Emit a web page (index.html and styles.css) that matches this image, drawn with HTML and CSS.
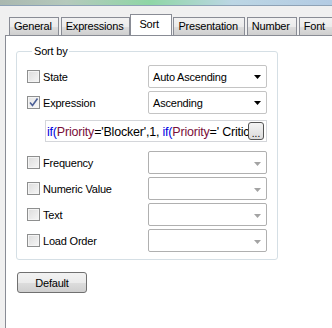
FILE: index.html
```html
<!DOCTYPE html>
<html lang="en">

<head>
    <meta charset="UTF-8">
    <title>Sort</title>
    <link rel="stylesheet" href="styles.css">
</head>

<body>
    <div class="titlebar"></div>

    <div class="tabs">
        <div class="tab">General</div>
        <div class="tab">Expressions</div>
        <div class="tab active">Sort</div>
        <div class="tab">Presentation</div>
        <div class="tab">Number</div>
        <div class="tab">Font</div>
        <div class="tab">Layout</div>
    </div>

    <div class="panel">
        <fieldset class="group">
            <legend>Sort by</legend>

            <div class="row">
                <label class="check"><span class="box"></span>State</label>
                <div class="select">Auto Ascending
                    <svg class="arrow" width="7" height="4" viewBox="0 0 7 4"><path d="M0 0H7L3.5 4Z" fill="#000"/></svg>
                </div>
            </div>

            <div class="row">
                <label class="check"><span class="box checked">
                    <svg width="11" height="11" viewBox="0 0 11 11"><path d="M2 5.5L4.5 8.5L9.5 1.5" fill="none" stroke="#4b5f96" stroke-width="1.6"/></svg>
                </span>Expression</label>
                <div class="select">Ascending
                    <svg class="arrow" width="7" height="4" viewBox="0 0 7 4"><path d="M0 0H7L3.5 4Z" fill="#000"/></svg>
                </div>
            </div>

            <div class="expr">
                <div class="code">
                    <span class="fn">if(</span><span class="fld">Priority</span>='Blocker',1, <span class="fn">if(</span><span class="fld">Priority</span>=' Critical',2,<br>
                    <span class="str">if(Priority='Major',3, if(Priority='Minor',4,5))))</span>
                </div>
                <button class="more">...</button>
            </div>

            <div class="row spaced">
                <label class="check"><span class="box"></span>Frequency</label>
                <div class="select disabled">
                    <svg class="arrow" width="7" height="4" viewBox="0 0 7 4"><path d="M0 0H7L3.5 4Z" fill="#a3a3a3"/></svg>
                </div>
            </div>

            <div class="row">
                <label class="check"><span class="box"></span>Numeric Value</label>
                <div class="select disabled">
                    <svg class="arrow" width="7" height="4" viewBox="0 0 7 4"><path d="M0 0H7L3.5 4Z" fill="#a3a3a3"/></svg>
                </div>
            </div>

            <div class="row">
                <label class="check"><span class="box"></span>Text</label>
                <div class="select disabled">
                    <svg class="arrow" width="7" height="4" viewBox="0 0 7 4"><path d="M0 0H7L3.5 4Z" fill="#a3a3a3"/></svg>
                </div>
            </div>

            <div class="row">
                <label class="check"><span class="box"></span>Load Order</label>
                <div class="select disabled">
                    <svg class="arrow" width="7" height="4" viewBox="0 0 7 4"><path d="M0 0H7L3.5 4Z" fill="#a3a3a3"/></svg>
                </div>
            </div>
        </fieldset>

        <button class="btn">Default</button>
    </div>
</body>

</html>
```

FILE: styles.css
```css
/* Reset */
* {
    margin: 0;
    padding: 0;
    box-sizing: border-box;
}

body {
    font-family: 'Liberation Sans', Arial, sans-serif;
    font-size: 11px;
    letter-spacing: -0.2px;
    color: #000;
    background-color: #f0f0f0;
    width: 332px;
    height: 328px;
    overflow: hidden;
}

.titlebar {
    height: 6px;
    background: linear-gradient(to right, #aab8b0, #b5c9bc 20%, #8fd6a6 45%, #bcd6e4 70%, #b3cbe3);
    border-bottom: 1px solid #8ea2b6;
}

/* Tabs */
.tabs {
    display: flex;
    align-items: flex-end;
    gap: 2px;
    padding-left: 9px;
    margin-top: 7px;
    height: 22px;
    position: relative;
    z-index: 1;
    overflow: hidden;
}

.tab {
    flex-shrink: 0;
    height: 18px;
    line-height: 17px;
    min-width: 42px;
    padding: 0 6px 0 4px;
    border: 1px solid #898c95;
    border-bottom: none;
    background: linear-gradient(#f2f2f2, #ebebeb 50%, #dddddd 51%, #cfcfcf);
    white-space: nowrap;
}

.tab.active {
    height: 22px;
    line-height: 18px;
    padding: 0 8px 0 8px;
    margin: 0 -1px -1px -2px;
    background: #fff;
}

/* Panel */
.panel {
    margin-left: 5px;
    height: 300px;
    background: #fff;
    border-left: 1px solid #898c95;
    border-top: 1px solid #898c95;
    padding: 9px 0 0 10px;
}

.group {
    width: 262px;
    min-width: 0;
    border: 1px solid #d5dfe5;
    border-radius: 3px;
    padding: 8px 10px 4px 10px;
}

.group legend {
    margin-left: 5px;
    padding: 0 2px;
}

.row {
    display: flex;
    align-items: center;
    justify-content: space-between;
    height: 23px;
    margin-bottom: 3px;
}

.row.spaced {
    margin-top: 9px;
}

.check {
    display: flex;
    align-items: center;
    gap: 3px;
}

.box {
    width: 13px;
    height: 13px;
    border: 1px solid #8e8f8f;
    background: linear-gradient(135deg, #dcdcdc, #f6f6f6);
    box-shadow: inset 0 0 0 1px #f4f4f4;
    display: flex;
    align-items: center;
    justify-content: center;
}

.box.checked {
    background: linear-gradient(135deg, #e4e4e4, #f8f8f8);
}

.select {
    width: 119px;
    height: 23px;
    border: 1px solid #c4c4c4;
    border-radius: 2px;
    padding-left: 4px;
    display: flex;
    align-items: center;
    justify-content: space-between;
    padding-right: 5px;
}

.select.disabled {
    border-color: #b0b0b0;
}

.select.disabled .arrow {
    margin-left: auto;
    margin-top: 3px;
}

/* Expression box */
.expr {
    margin: 6px 0 0 18px;
    height: 22px;
    border: 1px solid #d4d6da;
    position: relative;
    overflow: hidden;
}

.code {
    padding: 3px 0 0 1px;
    margin-right: 3px;
    overflow: hidden;
    line-height: 16px;
    white-space: nowrap;
    font-size: 12.5px;
}

.fn {
    color: #0000e0;
}

.fld {
    color: #7a0f3a;
}

.str {
    color: #10a010;
}

.more {
    position: absolute;
    right: 2px;
    top: 1px;
    width: 16px;
    height: 18px;
    border: 1px solid #555;
    border-radius: 3px;
    background: linear-gradient(#f4f4f4, #dcdcdc);
    font-family: inherit;
    font-size: 10px;
    line-height: 18px;
    padding-top: 2px;
}

/* Button */
.btn {
    margin: 12px 0 0 1px;
    width: 70px;
    height: 21px;
    border: 1px solid #707070;
    border-radius: 3px;
    background: linear-gradient(#f2f2f2, #ebebeb 50%, #dddddd 51%, #cfcfcf);
    font-family: inherit;
    font-size: 11px;
    letter-spacing: -0.2px;
}
```
